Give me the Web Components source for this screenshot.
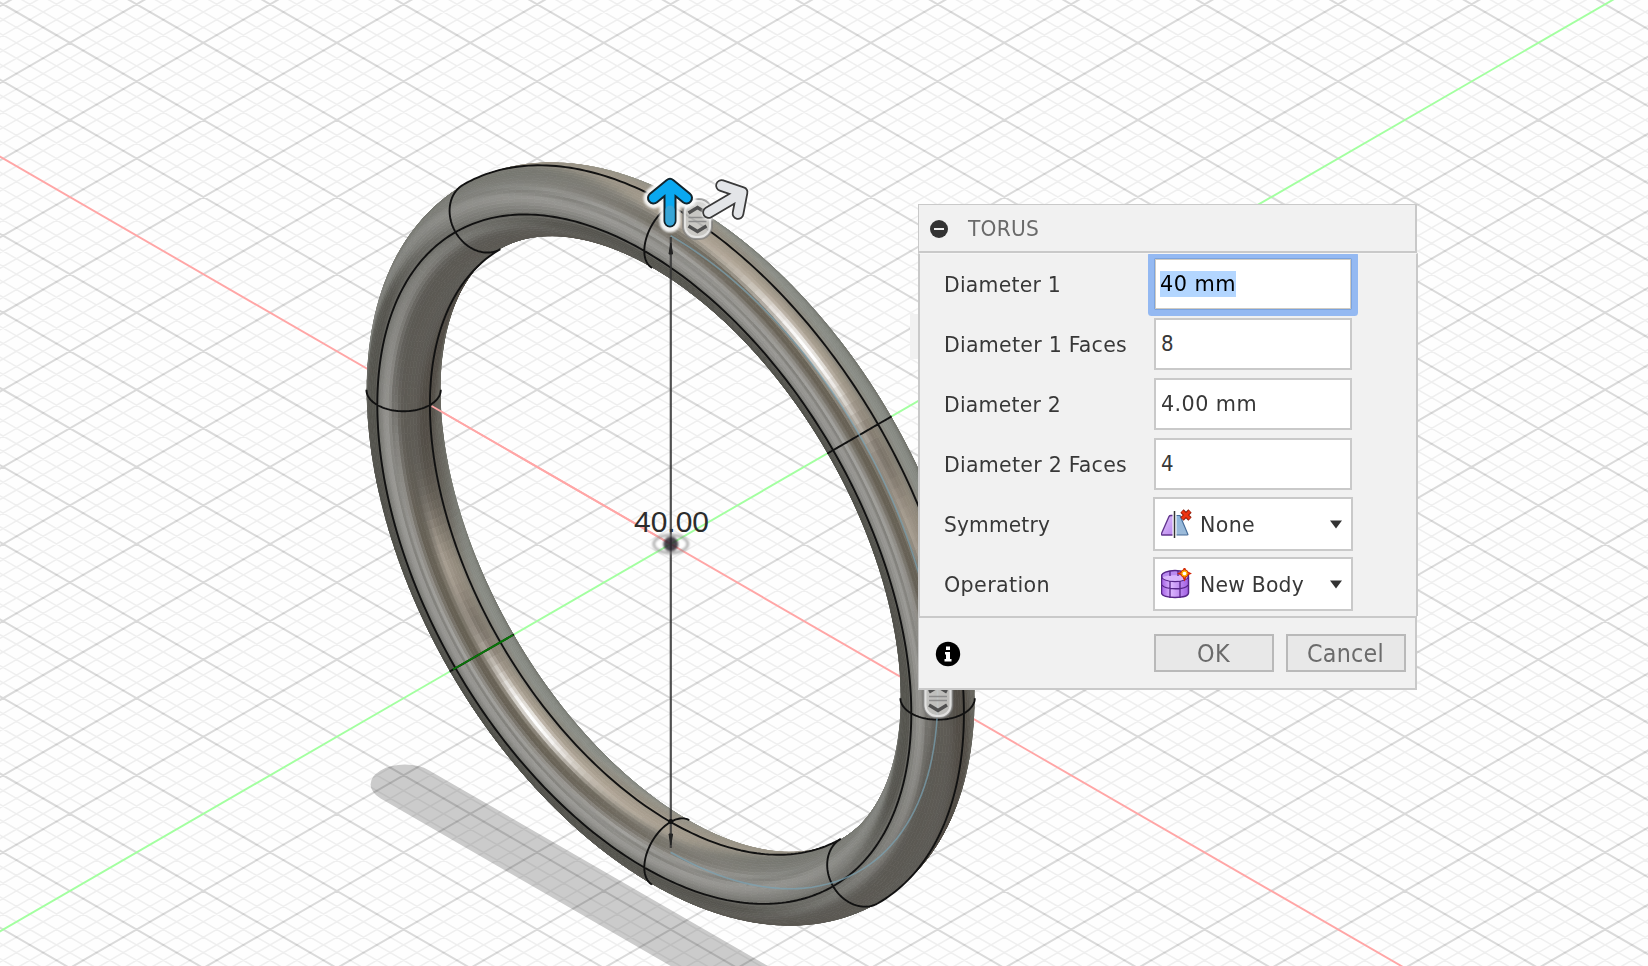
<!DOCTYPE html>
<html lang="en">
<head>
<meta charset="utf-8">
<title>Torus</title>
<style>
  html, body { margin: 0; height: 100%; overflow: hidden; background: #fefefe; }
  body { font-family: "DejaVu Sans Condensed", "DejaVu Sans", sans-serif; }
</style>
</head>
<body>
<cad-workspace>
  <cad-viewport slot="view"></cad-viewport>
  <tool-dialog slot="dialog" heading="TORUS" fit="71">
    <form-row label="Diameter 1" fit="117"><text-field value="40 mm" fit="76" focused></text-field></form-row>
    <form-row label="Diameter 1 Faces" fit="183"><text-field value="8" fit="12"></text-field></form-row>
    <form-row label="Diameter 2" fit="117"><text-field value="4.00 mm" fit="96"></text-field></form-row>
    <form-row label="Diameter 2 Faces" fit="183"><text-field value="4" fit="12"></text-field></form-row>
    <form-row label="Symmetry" fit="106"><combo-box value="None" fit="55">
      <svg width="32" height="32" viewBox="0 0 32 32">
        <defs><linearGradient id="sa" x2="1" y2="1"><stop stop-color="#e3c8fa"/><stop offset="1" stop-color="#b782ee"/></linearGradient>
        <linearGradient id="sb" y2="1" x2="0"><stop stop-color="#8fb6dc"/><stop offset="1" stop-color="#9dbbd9"/></linearGradient></defs>
        <path d="M10 7.500H14V27H1Q0 27 .500 25.500L8 8.500Q8.500 7.500 10 7.500Z" fill="url(#sa)" stroke="#61358e" stroke-width="1.400"/>
        <path d="M14 7.500H19L27 26.500Q27 27 26 27H14Z" fill="url(#sb)" stroke="#466b98" stroke-width="1.200"/>
        <path d="M13.500 3V30" stroke="#fff" stroke-width="4"/><path d="M13.500 3V30" stroke="#333" stroke-width="1.500"/>
        <path d="M21 3L29 11M29 3L21 11" stroke="#831808" stroke-width="4.600"/><path d="M21.200 3.200L28.800 10.800M28.800 3.200L21.200 10.800" stroke="#ed3510" stroke-width="3"/>
      </svg></combo-box></form-row>
    <form-row label="Operation" fit="106"><combo-box value="New Body" fit="104">
      <svg width="32" height="32" viewBox="0 0 32 32">
        <defs><linearGradient id="oa" x2="1"><stop stop-color="#a35fe4"/><stop offset=".35" stop-color="#dcb6ff"/><stop offset="1" stop-color="#a15fe2"/></linearGradient></defs>
        <path d="M.500 9V25C1 31 27 31 27.500 25V9" fill="url(#oa)" stroke="#572689" stroke-width="1.500"/>
        <ellipse cx="14" cy="8" rx="13.500" ry="5.500" fill="#b98af0" stroke="#572689" stroke-width="1.500"/>
        <path d="M1.500 9.500C5 6.500 23 6.500 26.500 9.500C24 14 4 14 1.500 9.500Z" fill="#d9b5fb"/>
        <path d="M1 17C4 22 25 22 27 17M9 13V30M19 13V30M9 3V8M17 3V8" fill="none" stroke="#572689" stroke-width="1.300"/>
        <path d="M23.500 0L25.500 3.500L29.500 5.500L25.500 7.500L23.500 12L21.500 7.500L17.500 5.500L21.500 3.500Z" fill="#ffb400" stroke="#d32408" stroke-width="1.300"/>
        <circle cx="23.500" cy="5.500" r="3.700" fill="#ffb000" stroke="#d33b08" stroke-width="1"/><circle cx="23.500" cy="5.500" r="1.800" fill="#fff"/>
      </svg></combo-box></form-row>
    <push-button slot="actions" label="OK" fit="33"></push-button>
    <push-button slot="actions" label="Cancel" fit="77"></push-button>
  </tool-dialog>
</cad-workspace>

<script>
const define = (name, html, ready) => customElements.define(name, class extends HTMLElement {
  connectedCallback() {
    if (this.shadowRoot) return;
    const t = document.createElement('template');
    t.innerHTML = typeof html === 'function' ? html(this) : html;
    this.attachShadow({ mode: 'open' }).append(t.content.cloneNode(true));
    if (ready) ready(this, this.shadowRoot);
  }
});

/* one line of text set to a given advance width: part glyph width, part tracking */
define('fit-text', e => `<style>:host{display:inline-block;white-space:pre}span{display:inline-block;transform-origin:0 50%}</style><span>${e.getAttribute('text')}</span>`, (e, root) => {
  const s = root.querySelector('span'), n = e.getAttribute('text').length, w = +e.getAttribute('width');
  const own = s.getBoundingClientRect().width;
  if (n > 1) {
    const k = Math.pow(w / own, .6);
    s.style.letterSpacing = ((w / k - own) / n).toFixed(3) + 'px';
    s.style.transform = `scaleX(${k.toFixed(4)})`;
    e.style.width = w + 'px';
  }
});

define('cad-workspace', `<style>
  :host{display:grid;width:1648px;height:966px;overflow:hidden}
  ::slotted(*){grid-area:1/1}
  ::slotted([slot=dialog]){margin:204px 0 0 910px;justify-self:start;align-self:start;z-index:1}
</style><slot name="view"></slot><slot name="dialog"></slot>`);

define('tool-dialog', e => `<style>
  :host{display:flex;width:508px;color:#383838;font-size:22px}
  .tab{width:8px;height:45px;margin-top:110px;background:#f1f1f1;flex:none}
  .panel{width:500px}
  header,footer{box-sizing:border-box;width:499px;background:#f1f1f1;border:1px solid #c9c9c9;border-right-width:2px;border-bottom-width:2px;display:flex;align-items:center}
  header{height:49px;color:#6a6a6a}
  header svg{margin:1px 20px 0 11px;flex:none}
  main{box-sizing:border-box;width:500px;height:363px;background:#f1f1f1;border:solid #c9c9c9;border-width:0 2px;border-top:1px solid #f6f6f6;display:flex;flex-direction:column;overflow:clip}
  footer{height:74px;border-top-width:2px;padding:0 9px 0 16px}
  footer svg{margin-top:1px}
  .grow{flex:1}
  .acts{display:flex;gap:12px}
</style>
<div class="tab"></div>
<div class="panel">
<header><svg width="18" height="18"><circle cx="9" cy="9" r="9" fill="#333"/><rect x="4" y="8" width="10" height="2" fill="#eee"/></svg><fit-text text="${e.getAttribute('heading')}" width="${e.getAttribute('fit')}"></fit-text></header>
<main><slot></slot></main>
<footer><svg width="26" height="26"><circle cx="13" cy="13" r="12.200" fill="#000"/><path d="M11 5.500h4v3.500h-4zM10 11h5v7h1.500v2.500h-7V18H11v-4.500h-1z" fill="#fff"/></svg><span class="grow"></span><div class="acts"><slot name="actions"></slot></div></footer>
</div>`);

define('form-row', e => `<style>
  :host{display:flex;height:60px;align-items:center}
  .l{width:209px;padding-left:24px}
  .c{width:200px;display:flex;justify-content:center}
</style><div class="l"><fit-text text="${e.getAttribute('label')}" width="${e.getAttribute('fit')}"></fit-text></div><div class="c"><slot></slot></div>`);

define('text-field', e => `<style>
  :host{display:flex;align-items:center;box-sizing:border-box;width:198px;height:52px;border:2px solid #c9c9c9;background:#fff;padding:0 4px 1px 5px}
  :host([focused]){color:#000;border:1px solid #7ba3de;padding:0 5px 1px;box-shadow:inset 0 0 0 1px #cfcbc3,0 0 0 6px #94b9f2;border-radius:1px}
  span{line-height:26px;display:block}
  :host([focused]) span{background:#b3d6ff}
</style><span><fit-text text="${e.getAttribute('value')}" width="${e.getAttribute('fit')}"></fit-text></span>`);

define('combo-box', e => `<style>
  :host{display:flex;align-items:center;box-sizing:border-box;width:200px;height:54px;border:2px solid #c9c9c9;background:#fff;padding:0 9px 0 6px}
  .t{margin-left:7px;flex:1}
</style><slot></slot><div class="t"><fit-text text="${e.getAttribute('value')}" width="${e.getAttribute('fit')}"></fit-text></div><svg width="12" height="9"><path d="M0 .500H12L6 8.500Z" fill="#333"/></svg>`);

define('push-button', e => `<style>
  :host{display:flex;align-items:center;justify-content:center;box-sizing:border-box;width:120px;height:38px;padding:1px 2px 0 0;border:2px solid #b9b9b9;background:#e8e8e8;color:#6b6b6b;font-size:24px}
</style><fit-text text="${e.getAttribute('label')}" width="${e.getAttribute('fit')}"></fit-text>`);

/* isometric scene: x = red axis, y = green axis, z = up, in millimetres */
const CX = 670.6, CY = 544, A = 13.35, B = 7.71, H = 15.416, TUBE = 1.93;
const proj = (x, y, z) => [CX + A * (x + y), CY + B * (x - y) - H * z];
const f = v => v.toFixed(2);
const poly = pts => 'M' + pts.map(p => f(p[0]) + ' ' + f(p[1])).join('L');
const RAD = Math.PI / 180;
const normal = (t, p) => [Math.cos(p) * Math.cos(t), Math.sin(p), Math.cos(p) * Math.sin(t)];
const point = (t, p, r = TUBE) => { const n = normal(t, p); return proj(20 * Math.cos(t) + r * n[0], r * n[1], 20 * Math.sin(t) + r * n[2]); };
const facing = (t, p) => { const n = normal(t, p); return (n[0] - n[1] + n[2]) * .57735; };

/* studio reflection: streaks across the tube, over a slower base tone */
const bands = [[-1,80,80,74],[-.85,86,85,79],[-.8,122,122,117],[-.7,146,145,141],[-.62,155,154,150],[-.54,130,129,124],[-.45,164,163,159],[-.34,130,126,118],[-.24,104,98,86],[-.1,106,100,87],[0,150,143,130],[.1,188,178,164],[.25,176,165,150],[.45,158,150,135],[.57,134,131,121],[.75,140,143,136],[.9,132,135,128],[1,116,118,111]];
const base = [[0,1,118,119,112],[-.5,.85,120,121,115],[-.8,.45,130,132,127],[-.816,.1,132,132,127],[-.95,-.2,92,91,86],[-.5,-.6,90,88,82],[-.6,-.35,94,92,87],[0,-1,92,90,85],[.4,-.75,80,75,68],[-.2,-.55,94,91,85],[-.45,.6,126,127,122],[.4,.8,154,148,135],[.3,.6,166,155,139],[-.25,.5,146,145,141],[.75,-.5,104,103,96],[.5,-.35,94,89,80],[1,0,134,137,131]];
const bell = v => Math.exp(-v * v);
function shade(t, p) {
  const n = normal(t, p);
  const nx = (n[0] + n[1]) * .7071, ny = .4082 * (n[1] - n[0]) + .8165 * n[2];
  const s = .866 * nx + .5 * ny, m = -.5 * nx + .866 * ny;
  let w = 0, c = [0, 0, 0];
  for (const b of base) {
    const g = Math.exp(-((b[0] - s) ** 2 + (b[1] - m) ** 2) / .05) + 1e-9;
    w += g; for (let i = 0; i < 3; i++) c[i] += g * b[i + 2];
  }
  c = c.map(v => v / w);
  let k = 0; while (k < bands.length - 2 && bands[k + 1][0] < s) k++;
  const a = bands[k], b = bands[k + 1], q = Math.max(0, Math.min(1, (s - a[0]) / (b[0] - a[0])));
  const wb = Math.exp(-((m / (m > 0 ? .66 : .38)) ** 4));
  const dark = 1 - .3 * bell((s - .25) / .25) * bell((m + .07) / .13);
  const hl = bell((s - .13) / .12) * bell((m - .22) / .17);
  return c.map((v, i) => { v = (v * (1 - wb) + (a[i + 1] + (b[i + 1] - a[i + 1]) * q) * wb) * dark; return Math.round(v + (255 - v) * hl); });
}

function mesh(from, to) {
  let out = '';
  const dt = 1.5, dp = 5;
  for (let t = from; t < to; t += dt) for (let p = -180; p < 180; p += dp) {
    const tm = (t + dt / 2) * RAD, pm = (p + dp / 2) * RAD;
    if (facing(tm, pm) < -.06) continue;
    const c = `rgb(${shade(tm, pm)})`;
    out += `<path d="${poly([point(t * RAD, p * RAD), point((t + dt) * RAD, p * RAD), point((t + dt) * RAD, (p + dp) * RAD), point(t * RAD, (p + dp) * RAD)])}Z" fill="${c}" stroke="${c}"/>`;
  }
  return `<g stroke-width=".7">${out}</g>`;
}
/* visible half of the tube, section by section, between its two silhouette angles */
function outline(from, to) {
  const sil = u => Math.atan2(Math.cos(u) + Math.sin(u), 1) + Math.PI / 2;
  let d = '';
  for (let t = from; t < to; t += 2) {
    const a = t * RAD, b = (t + 2.1) * RAD, pa = sil(a), pb = sil(b);
    d += poly([point(a, pa), point(b, pb), point(b, pb - Math.PI), point(a, pa - Math.PI)]) + 'Z';
  }
  return d;
}
function curve(fn, from, to, step) {
  let d = '', on = false;
  for (let v = from; v <= to + .001; v += step) {
    const [t, p] = fn(v * RAD);
    if (facing(t, p) > -.01) { const q = point(t, p, 1.97); d += (on ? 'L' : 'M') + f(q[0]) + ' ' + f(q[1]); on = true; } else on = false;
  }
  return d;
}
function grid(major) {
  let d = '';
  for (let i = -170; i <= 170; i++) {
    if (major ? i % 5 || i === 0 : i % 5 === 0) continue;
    d += poly([proj(i, -170, 0), proj(i, 170, 0)]) + poly([proj(-170, i, 0), proj(170, i, 0)]);
  }
  return d;
}
const pill = (x, y) => `<g transform="translate(${x} ${y})"><rect x="-14.500" y="-20" width="29" height="40" rx="13" fill="#cfcfcd" fill-opacity=".85" stroke="#777" stroke-opacity=".6" stroke-width="2"/>
  <rect x="-12.500" y="-18" width="25" height="36" rx="11" stroke="#f0f0f0" stroke-opacity=".7" stroke-width="2"/>
  <path d="M-9 -6L0 -11.500L9 -6M-9 7L0 12.500L9 7" fill="none" stroke="#505050" stroke-width="3.300"/><path d="M-9 -1.500H9M-9 2.500H9" stroke="#8c8c8c" stroke-width="1.300"/></g>`;
define('cad-viewport', () => {
  let edges = '';
  for (const p of [0, 90, 180, -90]) edges += curve(v => [v, p * RAD], 0, 360, 1);
  for (let t = 0; t < 360; t += 45) edges += curve(v => [t * RAD, v], -225, 135, 3);
  const axis = (a, b, c) => `<path d="${poly([proj(...a), proj(...b)])}" stroke="${c}" stroke-width="1.900"/>`;
  const blue = [];
  for (let v = -90; v <= 90; v += 2) blue.push(proj(20 * Math.cos(v * RAD), 0, 20 * Math.sin(v * RAD)));
  const minor = grid(false), major = grid(true);
  return `<style>:host{display:block;width:1648px;height:966px}svg{display:block}</style>
<svg width="1648" height="966" viewBox="0 0 1648 966" fill="none">
  <defs>
    <clipPath id="low"><path d="${outline(-180, 0)}"/></clipPath>
    <filter id="soft" x="-30%" y="-40%" width="160%" height="180%"><feGaussianBlur stdDeviation="1.200"/></filter>
    <filter id="halo" x="-50%" y="-50%" width="200%" height="200%"><feGaussianBlur stdDeviation="1"/></filter>
  </defs>
  <rect width="1648" height="966" fill="#fefefe"/>
  <g transform="matrix(${A} ${B} ${A} ${-B} ${CX} ${f(CY + H * 25.55)})"><path d="M-19.900 0H20" stroke="#cbcbcb" stroke-width="3.640" stroke-linecap="round"/></g>
  <path d="${minor}" stroke="#000" stroke-opacity=".06" stroke-width="1.600"/>
  <path d="${major}" stroke="#000" stroke-opacity=".14" stroke-width="2"/>
  ${axis([-120, 0, 0], [120, 0, 0], '#ffa6a6')}${axis([0, -120, 0], [0, 120, 0], '#a3ffa0')}
  ${mesh(-180, 0)}
  <g clip-path="url(#low)"><path d="${minor}" stroke="#000" stroke-opacity=".03" stroke-width="1.500"/><path d="${major}" stroke="#000" stroke-opacity=".11" stroke-width="1.800"/></g>
  ${mesh(0, 180)}
  <path d="${edges}" stroke="#111" stroke-width="1.900" stroke-linejoin="round"/>
  ${axis([0, 0, 0], [-17.9, 0, 0], '#ffa6a6')}
  <path d="M453 669.500L513 635" stroke="#087408" stroke-width="2"/>
  <path d="${poly(blue)}" stroke="#7ba3b3" stroke-opacity=".7" stroke-width="1.600"/>
  ${pill(938, 698)}${pill(697.5, 219)}
  <text x="634" y="531.500" font-family="Liberation Sans, Arial, sans-serif" font-size="29" textLength="75" lengthAdjust="spacingAndGlyphs" fill="#2c2c2c">40.00</text>
  <path d="M670.800 237V848" stroke="#333" stroke-opacity=".85" stroke-width="2.200"/>
  <path d="M670.800 243L669 254H672.600ZM670.800 845L669 834H672.600Z" fill="#222" stroke="#222"/>
  <circle cx="670.800" cy="821.500" r="2.500" fill="#111"/>
  <g filter="url(#soft)"><ellipse cx="670.800" cy="544" rx="17" ry="9" stroke="#888" stroke-opacity=".6" stroke-width="3"/><circle cx="670.800" cy="544" r="7.500" fill="#2b2530" fill-opacity=".85"/></g>
  <g stroke-linecap="round" stroke-linejoin="round">
    <path d="M709 213L742 193M722 185L744 192.500L738 215" stroke="#fff" stroke-opacity=".7" stroke-width="15" filter="url(#halo)"/>
    <path d="M708.500 212.500L740 194M721.500 185.500L742 192.500L738 213.500" stroke="#3a3a3a" stroke-width="12.500"/>
    <path d="M708.500 212.500L740 194M721.500 185.500L742 192.500L738 213.500" stroke="#e3e5e8" stroke-width="9"/>
    <path d="M670 185V222M654 198L670 184.500L686 198" stroke="#fff" stroke-width="21" stroke-opacity=".9" filter="url(#halo)"/>
    <path d="M670 185V221M653.500 198L670 184.500L686.500 198" stroke="#12242c" stroke-width="13"/>
    <path d="M670 185V221M653.500 198L670 184.500L686.500 198" stroke="#0aa8f0" stroke-width="9"/>
    <path d="M670 210V221" stroke="#39a5d6" stroke-width="9"/>
  </g>
</svg>`;
});
</script>
</body>
</html>
